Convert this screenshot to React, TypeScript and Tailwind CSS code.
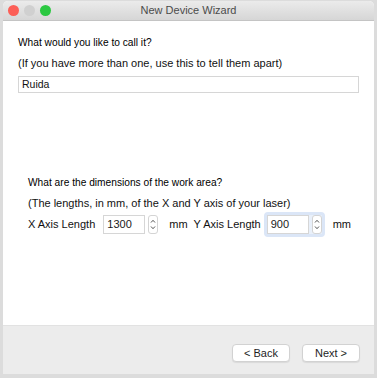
import { ReactNode } from "react"

const font = { fontFamily: '"Liberation Sans", Arial, sans-serif' }

function Stepper({ className = "" }: { className?: string }) {
  return (
    <div
      className={`flex h-[19px] w-[10px] items-center justify-center rounded-[3px] border border-[#d4d4d4] bg-white ${className}`}
    >
      <svg width="6" height="13" viewBox="0 0 6 13" fill="none">
        <path d="M1 4.5 L3 2.3 L5 4.5" stroke="#555" strokeWidth="1" />
        <path d="M1 8.5 L3 10.7 L5 8.5" stroke="#555" strokeWidth="1" />
      </svg>
    </div>
  )
}

function NumField({ value, focused }: { value: string; focused?: boolean }) {
  const box = (
    <div className="flex items-center">
      <div className="flex h-[19px] w-[42px] items-center border border-[#d6d6d6] bg-white pl-[3px] text-[11px] text-[#1a1a1a]">
        {value}
      </div>
      <Stepper className="ml-[3px]" />
    </div>
  )
  if (!focused) return box
  return (
    <div className="rounded-[4px] border-[3px] border-[#dbe6f7] bg-[#e9f0fa]">
      {box}
    </div>
  )
}

function Button({ children }: { children: ReactNode }) {
  return (
    <button className="flex h-[18px] w-[58px] items-center justify-center rounded-[4px] border border-[#d2d2d2] bg-white text-[11px] text-[#1e1e1e] shadow-[0_1px_1px_rgba(0,0,0,0.08)]">
      {children}
    </button>
  )
}

export default function App() {
  return (
    <div
      className="h-[378px] w-[377px] bg-[#dcdcdc] px-[3px] pt-[1px] pb-[4px]"
      style={font}
    >
      <div className="flex h-full flex-col overflow-hidden rounded-t-[5px] bg-white">
        {/* title bar */}
        <div className="relative flex h-[20px] shrink-0 items-center justify-center border-b border-[#c4c4c4] bg-gradient-to-b from-[#ebebeb] to-[#d6d6d6]">
          <div className="absolute left-[5px] top-[4px] flex gap-[5px]">
            <span className="h-[11px] w-[11px] rounded-full bg-[#fc5f57]" />
            <span className="h-[11px] w-[11px] rounded-full bg-[#d0d0d0]" />
            <span className="h-[11px] w-[11px] rounded-full bg-[#2bc841]" />
          </div>
          <span className="text-[11px] text-[#4b4b4b]">New Device Wizard</span>
        </div>

        {/* content */}
        <div className="flex flex-1 flex-col whitespace-nowrap px-[15px]">
          <div className="mt-[15px] text-[10.2px] leading-[14px] text-black">
            What would you like to call it?
          </div>
          <div className="mt-[5px] text-[11px] leading-[16px] text-[#111]">
            (If you have more than one, use this to tell them apart)
          </div>
          <div className="mt-[5px] flex h-[17px] items-center border border-[#d6d6d6] bg-white pl-[3px] text-[10.5px] text-[#111]">
            Ruida
          </div>

          <div className="mt-[83px] pl-[10px]">
            <div className="text-[10.2px] leading-[14px] text-black">
              What are the dimensions of the work area?
            </div>
            <div className="mt-[5px] text-[11px] leading-[16px] text-[#111]">
              (The lengths, in mm, of the X and Y axis of your laser)
            </div>
            <div className="mt-[1px] flex items-center text-[11px] text-[#111]">
              <span>X Axis Length</span>
              <div className="ml-[8px]">
                <NumField value="1300" />
              </div>
              <span className="ml-[11px]">mm</span>
              <span className="ml-[6px]">Y Axis Length</span>
              <div className="ml-[3px]">
                <NumField value="900" focused />
              </div>
              <span className="ml-[8px]">mm</span>
            </div>
          </div>
        </div>

        {/* footer */}
        <div className="flex h-[49px] shrink-0 items-start justify-end gap-[12px] border-t border-[#e2e2e2] bg-[#ececec] pr-[14px] pt-[18px]">
          <Button>&lt; Back</Button>
          <Button>Next &gt;</Button>
        </div>
      </div>
    </div>
  )
}
